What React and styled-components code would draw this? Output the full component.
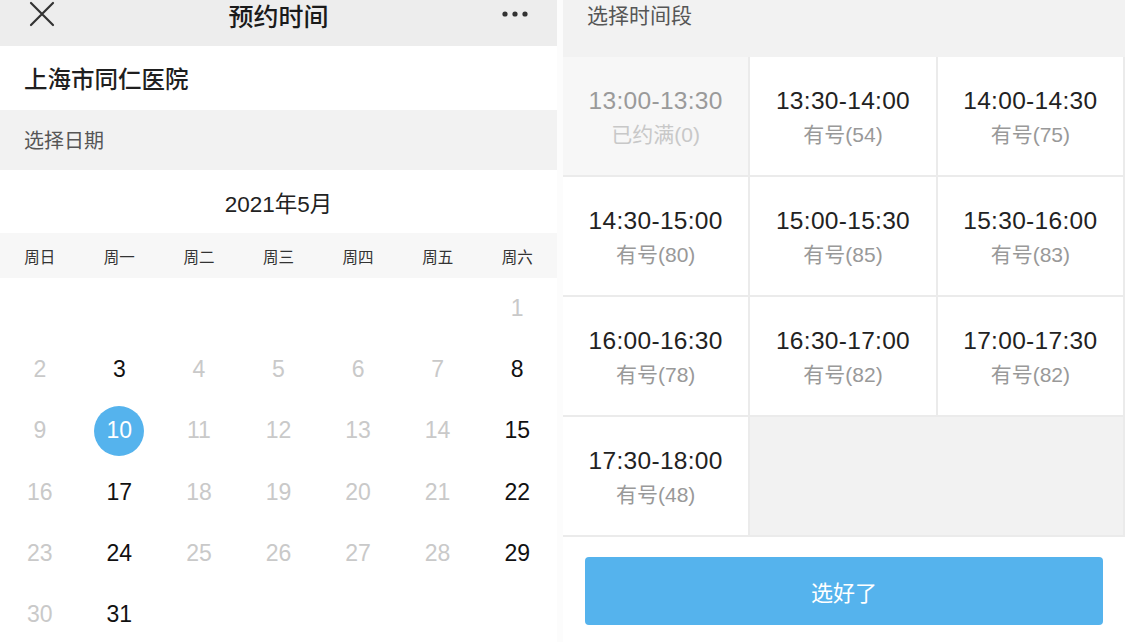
import React from "react";
import styled, { createGlobalStyle } from "styled-components";

const GlobalStyle = createGlobalStyle`
  html, body {
    margin: 0;
    padding: 0;
    background: #fcfcfc;
  }
  body {
    font-family: "Liberation Sans", "Noto Sans CJK SC", sans-serif;
    -webkit-font-smoothing: antialiased;
  }
`;

const Page = styled.div`
  width: 1125px;
  height: 642px;
  display: flex;
  gap: 6px;
  overflow: hidden;
  background: #fcfcfc;
`;

const Screen = styled.div`
  width: ${(p) => p.width}px;
  height: 642px;
  flex-shrink: 0;
  display: flex;
  flex-direction: column;
  background: #fff;
  overflow: hidden;
`;

const NavBar = styled.div`
  height: 46px;
  flex-shrink: 0;
  background: #ededed;
  display: flex;
  align-items: flex-start;
  justify-content: space-between;
  padding: 0 28px 0 28px;
`;

const NavTitle = styled.div`
  font-family: "Noto Sans CJK SC", sans-serif;
  font-size: 25px;
  font-weight: 500;
  color: #1a1a1a;
  line-height: 30px;
  padding-top: 0;
`;

const NavIcon = styled.div`
  width: 28px;
  height: 28px;
  display: flex;
  align-items: center;
  justify-content: center;
`;

const HospitalRow = styled.div`
  height: 64px;
  flex-shrink: 0;
  display: flex;
  align-items: center;
  padding-left: 24px;
  font-family: "Noto Sans CJK SC", sans-serif;
  font-size: 23.5px;
  font-weight: 500;
  color: #1f1f1f;
`;

const SectionHeader = styled.div`
  height: ${(p) => p.height}px;
  flex-shrink: 0;
  background: #f2f2f2;
  display: flex;
  align-items: ${(p) => (p.top ? "flex-start" : "center")};
  padding-left: ${(p) => p.indent}px;
  font-family: "Noto Sans CJK SC", sans-serif;
  font-size: ${(p) => p.size}px;
  line-height: 28px;
  color: #565656;
`;

const MonthTitle = styled.div`
  height: 63px;
  flex-shrink: 0;
  display: flex;
  align-items: center;
  justify-content: center;
  font-size: 22.5px;
  color: #222;
`;

const WeekRow = styled.div`
  height: 45px;
  flex-shrink: 0;
  background: #f7f7f7;
  display: grid;
  grid-template-columns: repeat(7, 1fr);
  align-items: center;
`;

const WeekDay = styled.div`
  text-align: center;
  font-family: "Noto Sans CJK SC", sans-serif;
  font-size: 15.5px;
  color: #333;
`;

const DayGrid = styled.div`
  display: grid;
  grid-template-columns: repeat(7, 1fr);
  grid-auto-rows: 61.2px;
`;

const DayCell = styled.div`
  display: flex;
  align-items: center;
  justify-content: center;
`;

const DayNum = styled.div`
  width: 50px;
  height: 50px;
  border-radius: 50%;
  display: flex;
  align-items: center;
  justify-content: center;
  font-size: 23px;
  color: ${(p) => (p.selected ? "#fff" : p.active ? "#111" : "#c9c9c9")};
  background: ${(p) => (p.selected ? "#55b3ed" : "transparent")};
`;

const SlotGrid = styled.div`
  display: grid;
  grid-template-columns: repeat(3, 1fr);
  grid-auto-rows: 118px;
  gap: 2px;
  padding: 0 2px 2px 0;
  background: #ebebeb;
  flex-shrink: 0;
`;

const Slot = styled.div`
  background: ${(p) => (p.full ? "#f7f7f7" : "#fff")};
  display: flex;
  flex-direction: column;
  align-items: center;
  padding-top: 30px;
  box-sizing: border-box;
`;

const SlotTime = styled.div`
  font-size: 24.5px;
  line-height: 28px;
  letter-spacing: 0.3px;
  color: ${(p) => (p.full ? "#9a9a9a" : "#222")};
`;

const SlotCount = styled.div`
  margin-top: 8px;
  font-size: 21px;
  line-height: 24px;
  color: ${(p) => (p.full ? "#c8c8c8" : "#999")};
`;

const SlotEmpty = styled.div`
  grid-column: span 2;
  background: #f2f2f2;
`;

const Footer = styled.div`
  flex: 1;
  background: #fff;
  padding: 20px 22px 0 22px;
`;

const ConfirmButton = styled.button`
  width: 100%;
  height: 68px;
  border: none;
  border-radius: 4px;
  background: #55b3ed;
  color: #fff;
  font-family: "Noto Sans CJK SC", sans-serif;
  font-size: 22px;
  cursor: pointer;
`;

const weekDays = ["周日", "周一", "周二", "周三", "周四", "周五", "周六"];
const activeDays = [3, 8, 10, 15, 17, 22, 24, 29, 31];

const days = [...Array(6).fill(null), ...Array.from({ length: 31 }, (_, i) => i + 1)];

const slots = [
  { time: "13:00-13:30", label: "已约满(0)", full: true },
  { time: "13:30-14:00", label: "有号(54)" },
  { time: "14:00-14:30", label: "有号(75)" },
  { time: "14:30-15:00", label: "有号(80)" },
  { time: "15:00-15:30", label: "有号(85)" },
  { time: "15:30-16:00", label: "有号(83)" },
  { time: "16:00-16:30", label: "有号(78)" },
  { time: "16:30-17:00", label: "有号(82)" },
  { time: "17:00-17:30", label: "有号(82)" },
  { time: "17:30-18:00", label: "有号(48)" },
];

const CloseIcon = () => (
  <svg width="26" height="26" viewBox="0 0 26 26">
    <path d="M2 2 L24 24 M24 2 L2 24" stroke="#333" strokeWidth="2.2" strokeLinecap="round" />
  </svg>
);

const MoreIcon = () => (
  <svg width="28" height="8" viewBox="0 0 28 8">
    <circle cx="4" cy="4" r="2.6" fill="#333" />
    <circle cx="14" cy="4" r="2.6" fill="#333" />
    <circle cx="24" cy="4" r="2.6" fill="#333" />
  </svg>
);

const App = () => {
  return (
    <Page>
      <GlobalStyle />
      <Screen width={557}>
        <NavBar>
          <NavIcon>
            <CloseIcon />
          </NavIcon>
          <NavTitle>预约时间</NavTitle>
          <NavIcon>
            <MoreIcon />
          </NavIcon>
        </NavBar>
        <HospitalRow>上海市同仁医院</HospitalRow>
        <SectionHeader height={60} indent={24} size={20}>
          选择日期
        </SectionHeader>
        <MonthTitle>2021年5月</MonthTitle>
        <WeekRow>
          {weekDays.map((d) => (
            <WeekDay key={d}>{d}</WeekDay>
          ))}
        </WeekRow>
        <DayGrid>
          {days.map((d, i) => (
            <DayCell key={i}>
              {d && (
                <DayNum active={activeDays.includes(d)} selected={d === 10}>
                  {d}
                </DayNum>
              )}
            </DayCell>
          ))}
        </DayGrid>
      </Screen>

      <Screen width={562}>
        <SectionHeader height={57} indent={24} size={21} top>
          选择时间段
        </SectionHeader>
        <SlotGrid>
          {slots.map((s) => (
            <Slot key={s.time} full={s.full}>
              <SlotTime full={s.full}>{s.time}</SlotTime>
              <SlotCount full={s.full}>{s.label}</SlotCount>
            </Slot>
          ))}
          <SlotEmpty />
        </SlotGrid>
        <Footer>
          <ConfirmButton>选好了</ConfirmButton>
        </Footer>
      </Screen>
    </Page>
  );
};

export default App;
